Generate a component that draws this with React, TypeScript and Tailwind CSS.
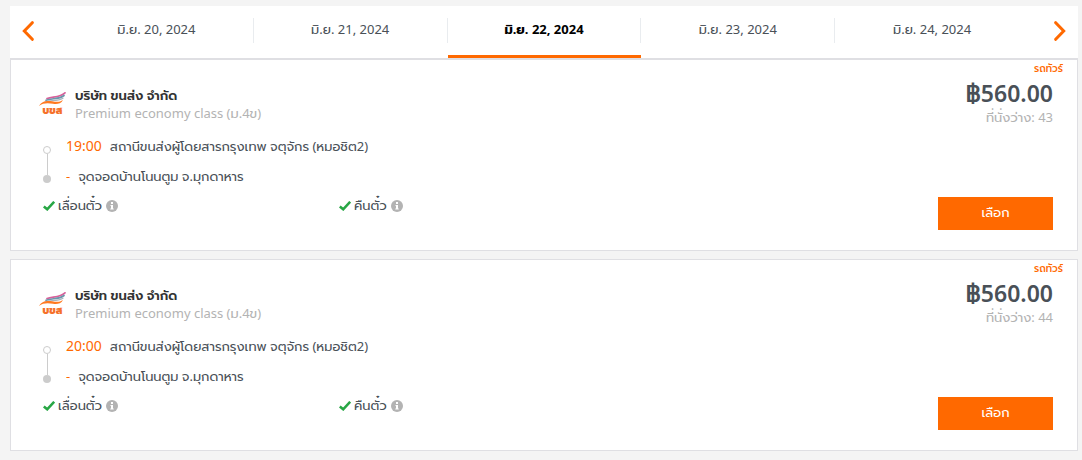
import { useState } from "react";

const dates = ["มิ.ย. 20, 2024", "มิ.ย. 21, 2024", "มิ.ย. 22, 2024", "มิ.ย. 23, 2024", "มิ.ย. 24, 2024"];

const trips = [
  { id: 1, time: "19:00", seats: 43 },
  { id: 2, time: "20:00", seats: 44 },
];

const Chevron = ({ flip = false }: { flip?: boolean }) => (
  <svg viewBox="0 0 12 20" className={`w-3 h-5 ${flip ? "rotate-180" : ""}`} fill="none" stroke="#ff6900" strokeWidth="3">
    <path d="M10.300 1.700 2.300 10l8 8.300" strokeLinecap="round" />
  </svg>
);

const OperatorLogo = () => (
  <div className="w-[27px] shrink-0">
    <svg viewBox="0 0 27 14" className="block w-full h-[14px]" fill="none" strokeLinecap="round">
      <path d="M8 6.500C14 4.500 21 5.500 26 .8" stroke="#d8609a" strokeWidth="1.7" />
      <path d="M7 8.300C13 6 20 7.500 25 3.500" stroke="#6d96ab" strokeWidth="1.7" />
      <path d="M6 10C12 8 18 9.500 24 6.200" stroke="#a8b4bc" strokeWidth="1.2" />
      <path d="M0 14C3 9 8 8.500 13 9.300s7.500 1 11-1.300c-2 3.800-6 4.500-10 3.800S4 10.500 0 14Z" fill="#ff7a21" />
    </svg>
    <div className="h-[10px] text-center text-[10px] leading-[9px] font-black text-[#f5712a]">บขส</div>
  </div>
);

const CheckIcon = () => (
  <svg viewBox="0 0 12 10" className="w-3 h-[10px] shrink-0" fill="none" stroke="#28a745" strokeWidth="2.6">
    <path d="M.8 5.500 4.200 8.300 11.200 .8" />
  </svg>
);

const InfoIcon = () => (
  <svg viewBox="0 0 12 12" className="w-3 h-3 shrink-0">
    <circle cx="6" cy="6" r="6" fill="#b3b3b3" />
    <path d="M5 2h2v2H5zM4.500 5H7v3.500h.7v1H4.300v-1H5V6h-.5z" fill="#fff" />
  </svg>
);

const Condition = ({ label }: { label: string }) => (
  <div className="flex w-[296px] items-center">
    <CheckIcon />
    <span className="ml-[3px] mr-1">{label}</span>
    <InfoIcon />
  </div>
);

const TripCard = ({ time, seats }: { time: string; seats: number }) => (
  <article className="flex h-48 justify-between border border-[#dfdfe3] bg-white">
    <div className="pl-7 pt-[26px]">
      <div className="flex h-9 items-center gap-[9px]">
        <OperatorLogo />
        <div className="leading-[18px]">
          <h2 className="font-semibold text-[#333]">บริษัท ขนส่ง จำกัด</h2>
          <p className="text-[#b3b3b3]">Premium economy class (ม.4ข)</p>
        </div>
      </div>

      {/* Route */}
      <div className="mt-[9px] flex gap-[15px] pl-1">
        <div className="flex flex-col items-center pt-[15px]">
          <span className="size-2 rounded-full border border-[#ccc]" />
          <span className="h-[21px] w-px bg-[#ccc]" />
          <span className="size-2 rounded-full bg-[#ccc]" />
        </div>
        <div className="leading-[30px]">
          <div className="flex gap-2">
            <span className="text-sm leading-[30px] text-[#ff6900]">{time}</span>
            <span>สถานีขนส่งผู้โดยสารกรุงเทพ จตุจักร (หมอชิต2)</span>
          </div>
          <div className="flex gap-2">
            <span className="text-[#ff6900]">-</span>
            <span>จุดจอดบ้านโนนตูม จ.มุกดาหาร</span>
          </div>
        </div>
      </div>

      <div className="flex h-[30px] pl-1">
        <Condition label="เลื่อนตั๋ว" />
        <Condition label="คืนตั๋ว" />
      </div>
    </div>

    <div className="flex flex-col items-end pr-6 pb-5">
      <div className="-mr-[10px] text-[10px] leading-4 font-medium text-[#ff6900]">รถทัวร์</div>
      <div className="pt-px text-[23px] leading-8 font-semibold">฿560.00</div>
      <div className="leading-4 text-[#b3b3b3]">ที่นั่งว่าง: {seats}</div>
      <button className="mt-auto h-[33px] w-[115px] bg-[#ff6900] pb-[2px] text-white">เลือก</button>
    </div>
  </article>
);

export default function App() {
  const [active, setActive] = useState(2);
  const prev = () => setActive((i) => Math.max(0, i - 1));
  const next = () => setActive((i) => Math.min(dates.length - 1, i + 1));

  return (
    <main className="min-h-screen bg-[#f4f4f4] pt-[6px] pr-1 pb-2 pl-[10px] font-['Noto_Sans','Prompt','Kanit','Noto_Sans_Thai',sans-serif] text-[13px] text-[#495057]">
      <nav className="flex h-[53px] border-b border-[#dfdfe3] bg-white">
        <button aria-label="Previous day" onClick={prev} className="flex w-[50px] shrink-0 items-center pb-[2px] pl-3">
          <Chevron />
        </button>
        {dates.map((date, i) => (
          <button
            key={date}
            onClick={() => setActive(i)}
            className={`flex-1 border-b-3 pt-3 pb-3 ${i === active ? "border-[#ff6900] font-bold text-black" : "border-transparent"}`}
          >
            <span className={`block h-[25px] leading-[22px] ${i < dates.length - 1 ? "border-r border-[#e9ecef]" : ""}`}>{date}</span>
          </button>
        ))}
        <button aria-label="Next day" onClick={next} className="flex w-[49px] shrink-0 items-center justify-end pr-3 pb-[2px]">
          <Chevron flip />
        </button>
      </nav>

      <section className="flex flex-col gap-2">
        {trips.map((trip) => (
          <TripCard key={trip.id} time={trip.time} seats={trip.seats} />
        ))}
      </section>
    </main>
  );
}
